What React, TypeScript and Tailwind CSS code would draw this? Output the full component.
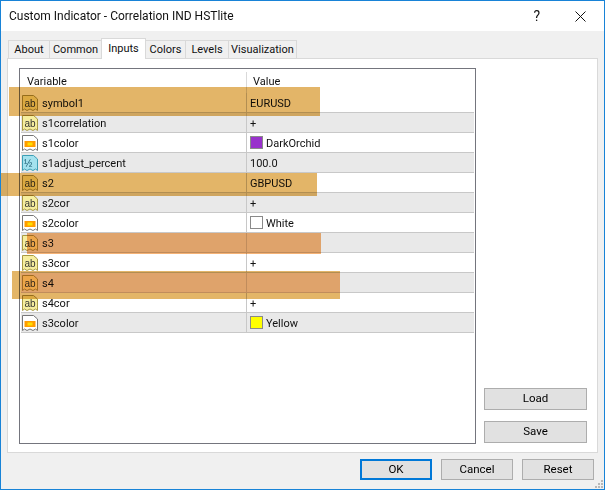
const font = { fontFamily: 'Roboto, "Noto Sans", sans-serif' };

const tabs = [
    { name: "About", w: "w-[42px]" },
    { name: "Common", w: "w-[53px]" },
    { name: "Inputs", w: "w-[45px]" },
    { name: "Colors", w: "w-[41px]" },
    { name: "Levels", w: "w-[44px]" },
    { name: "Visualization", w: "w-[69px]" },
];

const rows = [
    { name: "symbol1", type: "ab", value: "EURUSD" },
    { name: "s1correlation", type: "ab", value: "+" },
    { name: "s1color", type: "color", value: "DarkOrchid", swatch: "bg-[#9932cc]" },
    { name: "s1adjust_percent", type: "num", value: "100.0" },
    { name: "s2", type: "ab", value: "GBPUSD" },
    { name: "s2cor", type: "ab", value: "+" },
    { name: "s2color", type: "color", value: "White", swatch: "bg-white" },
    { name: "s3", type: "ab", value: "" },
    { name: "s3cor", type: "ab", value: "+" },
    { name: "s4", type: "ab", value: "" },
    { name: "s4cor", type: "ab", value: "+" },
    { name: "s3color", type: "color", value: "Yellow", swatch: "bg-[#ffff00]" },
];

const RowIcon = ({ type }: { type: string }) => {
    const page = "M0.5 0.5H11.5L15.5 4V15.5L13.5 14L11 15.5L8 14L5 15.5L2.5 14L0.5 15.5Z";
    if (type === "color") {
        return (
            <svg width="16" height="16" viewBox="0 0 16 16" className="shrink-0">
                <path d={page} fill="#fff" stroke="#777" />
                <rect x="2.5" y="6" width="11" height="6" fill="#ff9c00" />
                <rect x="5.5" y="7.5" width="5" height="3" fill="#ffe000" />
            </svg>
        );
    }
    if (type === "num") {
        return (
            <svg width="16" height="16" viewBox="0 0 16 16" className="shrink-0">
                <path d={page} fill="#a4e2ee" stroke="#3d9fb5" />
                <text x="2" y="12" fontSize="10" fill="#1a5a70" fontFamily="Liberation Sans">½</text>
            </svg>
        );
    }
    return (
        <svg width="16" height="16" viewBox="0 0 16 16" className="shrink-0">
            <path d={page} fill="#f6ee9e" stroke="#a89a44" />
            <text x="2.5" y="11.5" fontSize="10" fill="#333" fontFamily="Liberation Sans">ab</text>
        </svg>
    );
};

const Btn = ({ label, cls }: { label: string; cls: string }) => (
    <div className={`flex items-center justify-center bg-[#e1e1e1] text-black text-[11.5px] ${cls}`}>{label}</div>
);

export default function App() {
    return (
        <div style={font} className="relative flex flex-col w-[605px] h-[490px] border border-[#1883d7] bg-[#f0f0f0] text-[11px] text-[#111] overflow-hidden">
            {/* title bar */}
            <div className="flex items-center justify-between h-[30px] bg-white shrink-0 pl-[8px] pr-[18px]">
                <span className="text-[12px]">Custom Indicator - Correlation IND HSTlite</span>
                <div className="flex items-center gap-[35px]">
                    <span className="text-[14px]">?</span>
                    <svg width="11" height="11" viewBox="0 0 11 11">
                        <path d="M0.5 0.5L10.5 10.5M10.5 0.5L0.5 10.5" stroke="#111" strokeWidth="1" fill="none" />
                    </svg>
                </div>
            </div>

            {/* tabs */}
            <div className="flex items-end h-[27px] pl-[8px] shrink-0 relative z-10">
                {tabs.map((t) =>
                    t.name === "Inputs" ? (
                        <div key={t.name} className={`flex justify-center pt-[2px] h-[21px] -mb-px bg-white border border-b-0 border-[#d9d9d9] -ml-px ${t.w}`}>
                            {t.name}
                        </div>
                    ) : (
                        <div key={t.name} className={`flex items-center justify-center pt-[2px] h-[18px] bg-[#f0f0f0] border border-b-0 border-[#d9d9d9] -ml-px ${t.w}`}>
                            {t.name}
                        </div>
                    )
                )}
            </div>

            {/* panel */}
            <div className="flex ml-[6px] mr-[6px] h-[395px] shrink-0 border border-[#d9d9d9] bg-white pt-[9px] pl-[11px]">
                <div className="flex flex-col w-[457px] h-[376px] border border-[#74757d] p-px bg-white">
                    <div className="flex h-[23px] shrink-0 items-center pt-[2px]">
                        <div className="w-[226px] pl-[6px] h-full flex items-center border-r border-[#d9d9d9]">Variable</div>
                        <div className="pl-[6px]">Value</div>
                    </div>
                    {rows.map((r, i) => (
                        <div key={r.name} className={`flex h-[20px] shrink-0 items-center border-b border-[#c8c8c8] ${i % 2 === 1 ? "bg-[#e9e9e9]" : "bg-white"}`}>
                            <div className="flex items-center gap-[4px] w-[226px] h-full pl-[1px] border-r border-[#c8c8c8]">
                                <RowIcon type={r.type} />
                                <span className="pt-[3px]">{r.name}</span>
                            </div>
                            <div className="flex items-center gap-[3px] pl-[3px]">
                                {r.swatch && <span className={`w-[13px] h-[13px] border border-[#8a8a8a] ${r.swatch}`} />}
                                <span className="pt-[3px]">{r.value}</span>
                            </div>
                        </div>
                    ))}
                </div>
                <div className="flex flex-col justify-end gap-[11px] ml-[8px] pb-[11px] h-[386px]">
                    <Btn label="Load" cls="w-[103px] h-[22px] border border-[#adadad]" />
                    <Btn label="Save" cls="w-[103px] h-[22px] border border-[#adadad]" />
                </div>
            </div>

            {/* footer */}
            <div className="flex justify-end gap-[9px] pt-[6px] pr-[10px]">
                <Btn label="OK" cls="w-[72px] h-[21px] border-2 border-[#0078d7]" />
                <Btn label="Cancel" cls="w-[72px] h-[21px] border border-[#adadad]" />
                <Btn label="Reset" cls="w-[72px] h-[21px] border border-[#adadad]" />
            </div>

            {/* hand-drawn marker highlights over the table */}
            <div className="absolute left-[8px] top-[86px] w-[311px] h-[29px] bg-[#e3b568] mix-blend-multiply" />
            <div className="absolute left-[-1px] top-[172px] w-[317px] h-[23px] bg-[#e3b568] mix-blend-multiply" />
            <div className="absolute left-[26px] top-[232px] w-[294px] h-[21px] bg-[#f5b275] mix-blend-multiply" />
            <div className="absolute left-[11px] top-[270px] w-[328px] h-[2px] bg-[#e3b568] mix-blend-multiply" />
            <div className="absolute left-[11px] top-[272px] w-[9px] h-[20px] bg-[#e3b568] mix-blend-multiply" />
            <div className="absolute left-[20px] top-[272px] w-[319px] h-[20px] bg-[#f5b275] mix-blend-multiply" />
            <div className="absolute left-[11px] top-[292px] w-[328px] h-[6px] bg-[#e3b568] mix-blend-multiply" />

            {/* resize grip */}
            <svg width="10" height="10" viewBox="0 0 10 10" className="absolute right-0 bottom-0">
                <path d="M7 1h2v2H7zM4 4h2v2H4zM7 4h2v2H7zM1 7h2v2H1zM4 7h2v2H4zM7 7h2v2H7z" fill="#b8b8b8" />
            </svg>
        </div>
    );
}
